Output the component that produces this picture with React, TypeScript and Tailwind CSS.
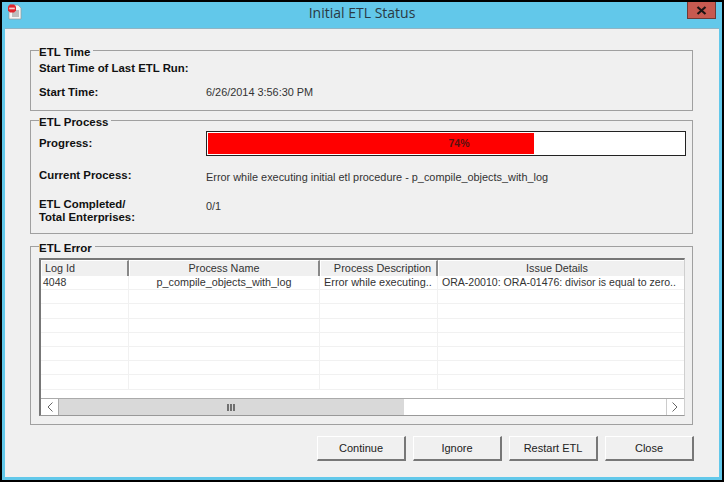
const columns = [
  { title: "Log Id", width: "w-[88px]", head: "pl-[3px] text-left text-[10.8px]", cell: "pl-[2px] text-left text-[10.5px]", value: "4048" },
  { title: "Process Name", width: "w-[191px]", head: "text-center text-[10.8px]", cell: "text-center text-[10.8px]", value: "p_compile_objects_with_log" },
  { title: "Process Description", width: "w-[118px]", head: "pl-[8px] text-center text-[10.95px]", cell: "pl-[4px] text-left text-[10.9px]", value: "Error while executing.." },
  { title: "Issue Details", width: "w-[249px]", head: "pr-[10px] text-center text-[10.8px]", cell: "pl-[4px] text-left text-[10.55px]", value: "ORA-20010: ORA-01476: divisor is equal to zero.." },
];

const rows = [0, 1, 2, 3, 4, 5, 6, 7];

function Group({ title, className, children }: { title: string; className: string; children: React.ReactNode }) {
  return (
    <fieldset className={`w-[663px] border border-[#a0a0a0] ${className}`}>
      <legend className="ml-[8px] pr-[3px] pt-[4px] text-[11.5px] leading-[13px] font-bold text-[#111]">{title}</legend>
      {children}
    </fieldset>
  );
}

function Label({ children, className = "" }: { children: React.ReactNode; className?: string }) {
  return <div className={`w-[167px] shrink-0 text-[11.4px] leading-[13px] font-bold text-[#111] ${className}`}>{children}</div>;
}

function DialogButton({ label }: { label: string }) {
  return (
    <button className="h-[25px] w-[89px] border-t border-l border-b-2 border-r-2 border-t-white border-l-white border-b-[#777] border-r-[#777] bg-[#f0f0f0] text-[11px] text-[#222]">
      {label}
    </button>
  );
}

function AppIcon() {
  return (
    <svg width="16" height="16" viewBox="0 0 16 16" className="ml-[5px] mt-[2px]">
      <path d="M2 1h9l3 3v11H2z" fill="#f4f4f4" stroke="#9a9a9a" strokeWidth="0.7" />
      <rect x="5" y="6" width="7" height="7" fill="#bdbdbd" />
      <path d="M3 0.5h4l2 2v4l-2 2H3l-2-2v-4z" fill="#e0262e" />
      <rect x="2.2" y="3.6" width="5.6" height="1.7" fill="#f6d0d0" />
    </svg>
  );
}

function CloseButton() {
  return (
    <div className="mr-[6px] flex h-[17px] w-[29px] items-center justify-center border border-t-0 border-[#6e3a36] bg-[#c75a50]">
      <svg width="11" height="9" viewBox="0 0 11 9">
        <path d="M1.5 1l8 7M9.5 1l-8 7" stroke="#1c1414" strokeWidth="2.2" />
      </svg>
    </div>
  );
}

export default function App() {
  return (
    <div className="h-[482px] w-[724px] bg-black p-[2px] font-['Liberation_Sans',Arial,sans-serif]">
      <div className="flex h-[478px] flex-col bg-[#62c8ea] px-[3px] pb-[3px]">
        <div className="-mx-[3px] flex h-[26px] shrink-0 items-start">
          <div className="flex-1">
            <AppIcon />
          </div>
          <div className="pt-[1px] font-['Open_Sans',sans-serif] text-[14px] leading-[19px] text-[#2a3a44]">Initial ETL Status</div>
          <div className="flex flex-1 justify-end">
            <CloseButton />
          </div>
        </div>
        <div className="flex flex-1 flex-col border-t border-[#8fb4c4] bg-[#f0f0f0] pl-[25px]">
          <Group title="ETL Time" className="mt-[13px] h-[69px]">
            <div className="pt-[3px] pl-[8px]">
              <Label className="w-[190px]">Start Time of Last ETL Run:</Label>
              <div className="mt-[11px] flex">
                <Label>Start Time:</Label>
                <div className="text-[10.9px] leading-[13px] text-[#333]">6/26/2014 3:56:30 PM</div>
              </div>
            </div>
          </Group>

          <Group title="ETL Process" className="mt-[1px] h-[122px]">
            <div className="pl-[8px]">
              <div className="flex items-center pt-[2px]">
                <Label>Progress:</Label>
                <div className="relative h-[25px] w-[480px] border border-[#222] bg-white p-[1px]">
                  <div className="h-full w-[326px] bg-[#ff0000]" />
                  <div className="absolute inset-0 flex items-center justify-center pl-[26px] text-[10.5px] font-bold text-[#5a1010]">74%</div>
                </div>
              </div>
              <div className="mt-[13px] flex">
                <Label>Current Process:</Label>
                <div className="pt-[2px] text-[10.9px] leading-[13px] text-[#333]">Error while executing initial etl procedure - p_compile_objects_with_log</div>
              </div>
              <div className="mt-[14px] flex">
                <Label>ETL Completed/<br />Total Enterprises:</Label>
                <div className="pt-[2px] text-[10.9px] leading-[13px] text-[#333]">0/1</div>
              </div>
            </div>
          </Group>

          <Group title="ETL Error" className="mt-[4px] h-[187px]">
            <div className="ml-[8px] mt-[3px] flex h-[158px] w-[646px] flex-col overflow-hidden border-t-2 border-r border-b border-l-2 border-t-[#777] border-r-[#cfcfcf] border-b-[#999] border-l-[#777] bg-white">
              <div className="flex h-[16px] shrink-0 bg-[#f0f0f0]">
                {columns.map((c) => (
                  <div key={c.title} className={`${c.width} ${c.head} shrink-0 border-t border-r-2 border-l border-t-white border-r-[#888] border-l-white leading-[15px] text-[#333]`}>
                    {c.title}
                  </div>
                ))}
              </div>
              <div className="h-[122px] shrink-0 overflow-hidden">
                {rows.map((r) => (
                  <div key={r} className="flex h-[14.2px] border-b border-[#f1f1f1]">
                    {columns.map((c) => (
                      <div key={c.title} className={`${c.width} ${c.cell} shrink-0 overflow-hidden border-r border-[#f1f1f1] leading-[13px] whitespace-nowrap text-[#333]`}>
                        {r === 0 ? c.value : ""}
                      </div>
                    ))}
                  </div>
                ))}
              </div>
              <div className="flex h-[17px] shrink-0 border-t border-[#aaa]">
                <div className="flex w-[18px] items-center justify-center border-r border-[#aaa]">
                  <svg width="8" height="10" viewBox="0 0 8 10"><path d="M6.5 0.5L2 5l4.5 4.5" fill="none" stroke="#666" strokeWidth="1" /></svg>
                </div>
                <div className="flex w-[345px] items-center justify-center bg-[#d9d9d9]">
                  <svg width="9" height="7" viewBox="0 0 9 7"><path d="M1 0v7M4 0v7M7 0v7" stroke="#555" strokeWidth="1.6" /></svg>
                </div>
                <div className="flex-1" />
                <div className="mr-[1px] flex w-[17px] items-center justify-center border-l border-[#ccc]">
                  <svg width="8" height="10" viewBox="0 0 8 10"><path d="M1.5 0.5L6 5l-4.5 4.5" fill="none" stroke="#666" strokeWidth="1" /></svg>
                </div>
              </div>
            </div>
          </Group>

          <div className="mt-[11px] flex w-[664px] justify-end gap-[7px]">
            <DialogButton label="Continue" />
            <DialogButton label="Ignore" />
            <DialogButton label="Restart ETL" />
            <DialogButton label="Close" />
          </div>
        </div>
      </div>
    </div>
  );
}
